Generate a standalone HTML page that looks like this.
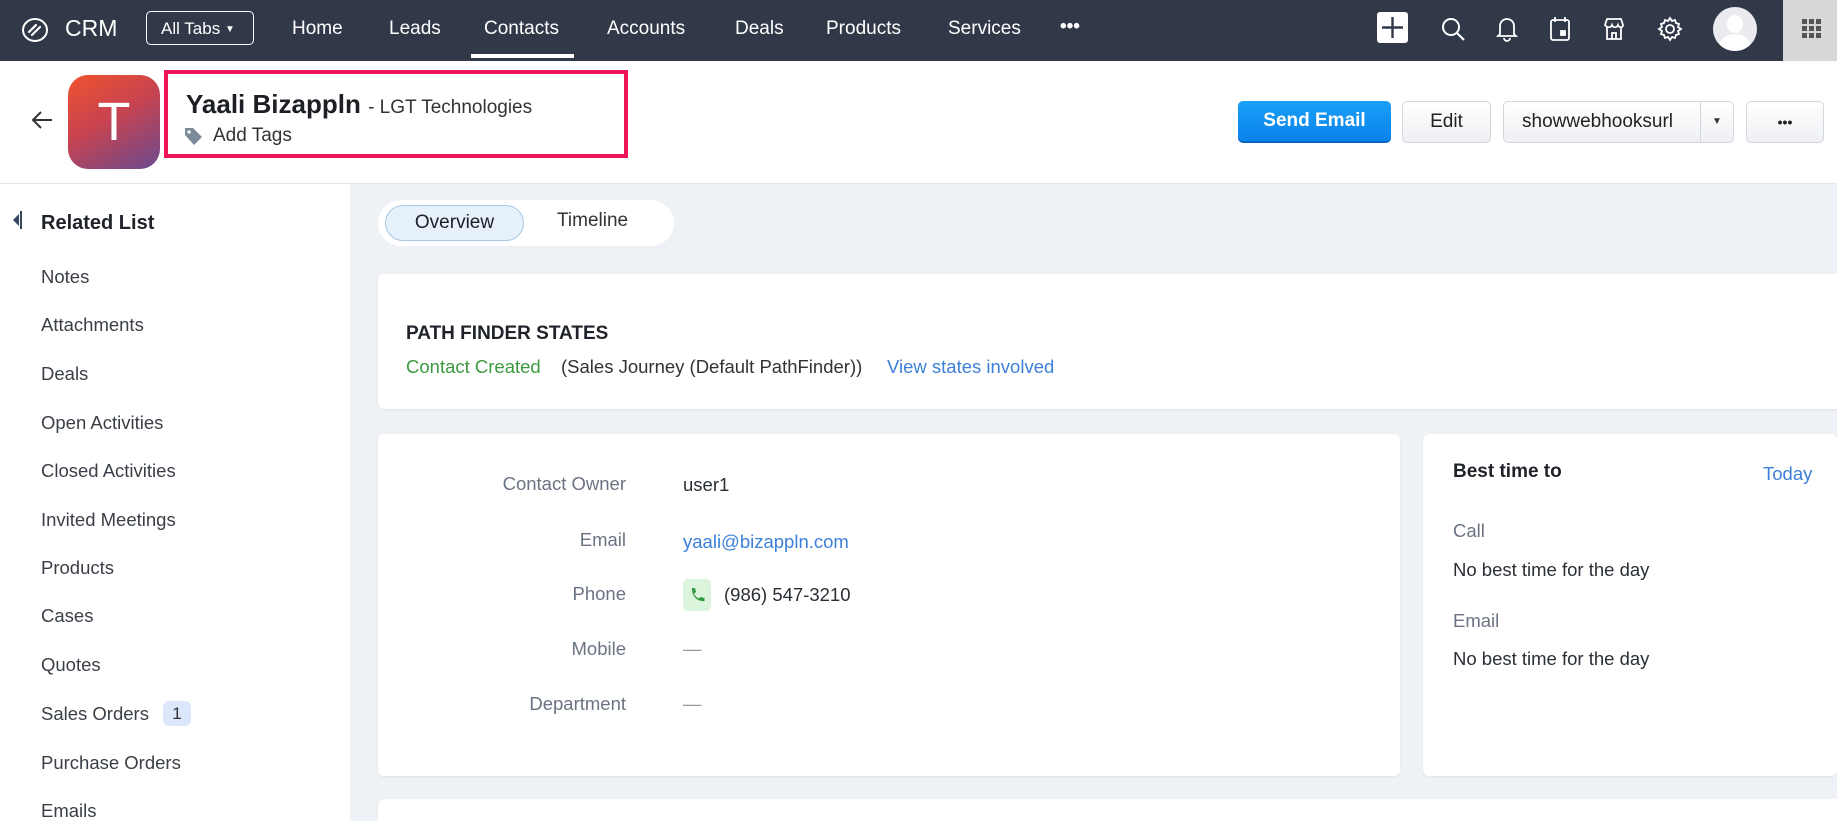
<!DOCTYPE html>
<html style="width:1837px;height:821px;overflow:hidden"><head><meta charset="utf-8"><style>
*{margin:0;padding:0;box-sizing:border-box}
body{width:1837px;height:821px;overflow:hidden;font-family:"Liberation Sans",sans-serif;background:#eef1f5;position:relative;color:#222}
.a{position:absolute;white-space:nowrap}
.top{position:absolute;left:0;top:0;width:1837px;height:61px;background:#313949}
.nav{color:#fff;font-size:19px;top:18px}
.side{position:absolute;left:0;top:184px;width:350px;height:637px;background:#fff}
.si{left:41px;font-size:18.5px;color:#3a3f47}
.card{position:absolute;background:#fff;border-radius:6px;box-shadow:0 1px 2px rgba(0,0,0,.06)}
.lbl{font-size:18.5px;color:#6b7383;text-align:right;right:1211px}
.val{font-size:18.5px;left:683px;color:#2a2f36}
.btn{position:absolute;top:101px;height:42px;border:1px solid #d3d6db;border-radius:5px;background:linear-gradient(#fff,#eef0f3);font-size:19px;color:#222;display:flex;align-items:center;justify-content:center}
</style></head><body>
<div class="top"></div>
<svg class="a" style="left:21px;top:17px" width="28" height="26" viewBox="0 0 28 26"><ellipse cx="14" cy="13" rx="12" ry="11" fill="none" stroke="#fff" stroke-width="2"/><path d="M8 15 L15 8 M11 18 L19 10" stroke="#fff" stroke-width="2.2" stroke-linecap="round"/></svg>
<div class="a" style="left:65px;top:15px;color:#fff;font-size:23px">CRM</div>
<div class="a" style="left:146px;top:11px;width:108px;height:34px;border:1px solid #fff;border-radius:5px;color:#fff;font-size:17px;padding:7px 0 0 14px">All Tabs <span style="font-size:10px;vertical-align:2px">▼</span></div>
<div class="a nav" style="left:292px">Home</div>
<div class="a nav" style="left:389px">Leads</div>
<div class="a nav" style="left:484px">Contacts</div>
<div class="a" style="left:471px;top:54px;width:103px;height:4px;background:#fff"></div>
<div class="a nav" style="left:607px">Accounts</div>
<div class="a nav" style="left:735px">Deals</div>
<div class="a nav" style="left:826px">Products</div>
<div class="a nav" style="left:948px">Services</div>
<div class="a nav" style="left:1060px;top:16px;font-weight:bold">•••</div>
<div class="a" style="left:1377px;top:12px;width:31px;height:31px;background:#fff;border-radius:3px"></div>
<svg class="a" style="left:1377px;top:12px" width="31" height="31"><path d="M15.5 5v21M5 15.5h21" stroke="#313949" stroke-width="2.4"/></svg>
<svg class="a" style="left:1441px;top:17px" width="26" height="26" fill="none" stroke="#fff" stroke-width="2"><circle cx="10" cy="10" r="8"/><path d="M16 16l7 7"/></svg>
<svg class="a" style="left:1496px;top:16px" width="22" height="26" fill="none" stroke="#fff" stroke-width="1.8"><path d="M4 18V10a7 7 0 0 1 14 0v8l2 2H2z"/><path d="M8 22a3 3 0 0 0 6 0"/></svg>
<svg class="a" style="left:1549px;top:16px" width="22" height="26" fill="none" stroke="#fff" stroke-width="1.8"><rect x="2" y="4" width="18" height="20" rx="2"/><path d="M6 1v5M16 1v5"/><rect x="12" y="15" width="4" height="4" fill="#fff"/></svg>
<svg class="a" style="left:1603px;top:17px" width="22" height="24" fill="none" stroke="#fff" stroke-width="1.8"><path d="M2 8l2-6h14l2 6c0 3-4 3-5 0-1 3-5 3-6 0-1 3-5 3-7 0zM4 10v12h14V10M9 22v-6h4v6"/></svg>
<svg class="a" style="left:1657px;top:16px" width="26" height="26" fill="none" stroke="#fff" stroke-width="1.8"><circle cx="13" cy="13" r="4"/><path d="M13 2l2 3 3-1 1 3 3 1-1 3 3 2-3 2 1 3-3 1-1 3-3-1-2 3-2-3-3 1-1-3-3-1 1-3-3-2 3-2-1-3 3-1 1-3 3 1z"/></svg>
<div class="a" style="left:1713px;top:7px;width:44px;height:44px;border-radius:50%;background:#e9ebef;overflow:hidden"><div style="position:absolute;left:14px;top:8px;width:16px;height:18px;border-radius:50%;background:#fff"></div><div style="position:absolute;left:7px;top:27px;width:30px;height:22px;border-radius:50%;background:#fff"></div></div>
<div class="a" style="left:1783px;top:0;width:54px;height:61px;background:#d6d7d9"></div>
<svg class="a" style="left:1802px;top:19px" width="20" height="20" fill="#555"><rect x="0" y="0" width="5" height="5"/><rect x="7" y="0" width="5" height="5"/><rect x="14" y="0" width="5" height="5"/><rect x="0" y="7" width="5" height="5"/><rect x="7" y="7" width="5" height="5"/><rect x="14" y="7" width="5" height="5"/><rect x="0" y="14" width="5" height="5"/><rect x="7" y="14" width="5" height="5"/><rect x="14" y="14" width="5" height="5"/></svg>

<div class="a" style="left:0;top:61px;width:1837px;height:123px;background:#fff;border-bottom:1px solid #e3e6ea"></div>
<svg class="a" style="left:30px;top:109px" width="24" height="22" fill="none" stroke="#333" stroke-width="2"><path d="M22 11H3M11 3l-8 8 8 8"/></svg>
<div class="a" style="left:68px;top:75px;width:92px;height:94px;border-radius:20px;background:linear-gradient(150deg,#f0532e 0%,#c8434f 45%,#6a4a8f 100%);color:#fff;font-size:54px;text-align:center;line-height:94px">T</div>
<div class="a" style="left:164px;top:70px;width:464px;height:88px;border:4px solid #ec1558"></div>
<div class="a" style="left:186px;top:89px;font-size:26px;font-weight:bold;color:#1c1f24">Yaali Bizappln <span style="font-size:19px;font-weight:normal;color:#333">- LGT Technologies</span></div>
<svg class="a" style="left:183px;top:125px" width="21" height="22"><path d="M2 10V3h8l9 9-8 8z" fill="#7d8a99"/><circle cx="6" cy="7" r="1.6" fill="#fff"/></svg>
<div class="a" style="left:213px;top:125px;font-size:19px;color:#333">Add Tags</div>

<div class="a" style="left:1238px;top:101px;width:153px;height:42px;border-radius:5px;background:linear-gradient(#1aa0f7,#0a82ea);border-bottom:2px solid #0666c4;color:#fff;font-size:19px;font-weight:bold;text-align:center;line-height:40px">Send Email</div>
<div class="btn" style="left:1402px;width:89px">Edit</div>
<div class="btn" style="left:1503px;width:231px;justify-content:flex-start;padding-left:18px">showwebhooksurl<span style="position:absolute;left:196px;top:0;width:1px;height:40px;background:#d3d6db"></span><span style="position:absolute;left:208px;top:14px;font-size:10px;color:#333">▼</span></div>
<div class="btn" style="left:1746px;width:78px;font-weight:bold;font-size:14px">•••</div>

<div class="side"></div>
<div class="a" style="left:13px;top:214px;width:0;height:0;border-top:6px solid transparent;border-bottom:6px solid transparent;border-right:6px solid #34475f"></div>
<div class="a" style="left:20px;top:211px;width:2px;height:18px;background:#34475f"></div>
<div class="a" style="left:41px;top:212px;font-size:20px;font-weight:bold;color:#1f2329">Related List</div>
<div class="a si" style="top:266px">Notes</div>
<div class="a si" style="top:314px">Attachments</div>
<div class="a si" style="top:363px">Deals</div>
<div class="a si" style="top:412px">Open Activities</div>
<div class="a si" style="top:460px">Closed Activities</div>
<div class="a si" style="top:509px">Invited Meetings</div>
<div class="a si" style="top:557px">Products</div>
<div class="a si" style="top:605px">Cases</div>
<div class="a si" style="top:654px">Quotes</div>
<div class="a si" style="top:703px">Sales Orders</div>
<div class="a" style="left:163px;top:701px;width:28px;height:25px;border-radius:6px;background:#dce7fb;font-size:17px;text-align:center;line-height:25px;color:#333">1</div>
<div class="a si" style="top:752px">Purchase Orders</div>
<div class="a si" style="top:800px">Emails</div>

<div class="a" style="left:378px;top:200px;width:296px;height:46px;background:#fff;border-radius:23px"></div>
<div class="a" style="left:385px;top:205px;width:139px;height:36px;background:#e6f1fb;border:1px solid #a8c7e6;border-radius:18px;text-align:center;line-height:34px;font-size:19px;color:#1c1f24">Overview</div>
<div class="a" style="left:557px;top:210px;font-size:19px;color:#333">Timeline</div>

<div class="card" style="left:378px;top:274px;width:1470px;height:135px"></div>
<div class="a" style="left:406px;top:323px;font-size:19px;font-weight:bold;color:#1f2329">PATH FINDER STATES</div>
<div class="a" style="left:406px;top:356px;font-size:18.5px;color:#3b9a3e">Contact Created</div>
<div class="a" style="left:561px;top:356px;font-size:18.5px;color:#333">(Sales Journey (Default PathFinder))</div>
<div class="a" style="left:887px;top:356px;font-size:18.5px;color:#3d80d9">View states involved</div>

<div class="card" style="left:378px;top:434px;width:1022px;height:342px"></div>
<div class="a lbl" style="top:473px">Contact Owner</div>
<div class="a val" style="top:474px">user1</div>
<div class="a lbl" style="top:529px">Email</div>
<div class="a val" style="top:531px;color:#3d80d9">yaali@bizappln.com</div>
<div class="a lbl" style="top:583px">Phone</div>
<div class="a" style="left:683px;top:579px;width:28px;height:32px;border-radius:5px;background:#dcf3dc"></div>
<svg class="a" style="left:688px;top:586px" width="18" height="18"><path d="M4 2l3 0 1 4-2 1.5c1 2.5 2.5 4 5 5L12.5 11l4 1 0 3c-7 1-13-5-12.5-13z" fill="#2f9a3f"/></svg>
<div class="a val" style="left:724px;top:584px">(986) 547-3210</div>
<div class="a lbl" style="top:638px">Mobile</div>
<div class="a val" style="top:638px;color:#999">—</div>
<div class="a lbl" style="top:693px">Department</div>
<div class="a val" style="top:693px;color:#999">—</div>

<div class="card" style="left:1423px;top:434px;width:414px;height:342px"></div>
<div class="a" style="left:1453px;top:461px;font-size:19px;font-weight:bold;color:#1f2329">Best time to</div>
<div class="a" style="left:1763px;top:463px;font-size:18.5px;color:#3d80d9">Today</div>
<div class="a" style="left:1453px;top:520px;font-size:18.5px;color:#6b7383">Call</div>
<div class="a" style="left:1453px;top:559px;font-size:18.5px;color:#2a2f36">No best time for the day</div>
<div class="a" style="left:1453px;top:610px;font-size:18.5px;color:#6b7383">Email</div>
<div class="a" style="left:1453px;top:648px;font-size:18.5px;color:#2a2f36">No best time for the day</div>

<div class="card" style="left:378px;top:799px;width:1459px;height:22px;border-radius:6px 0 0 0"></div>
</body></html>
